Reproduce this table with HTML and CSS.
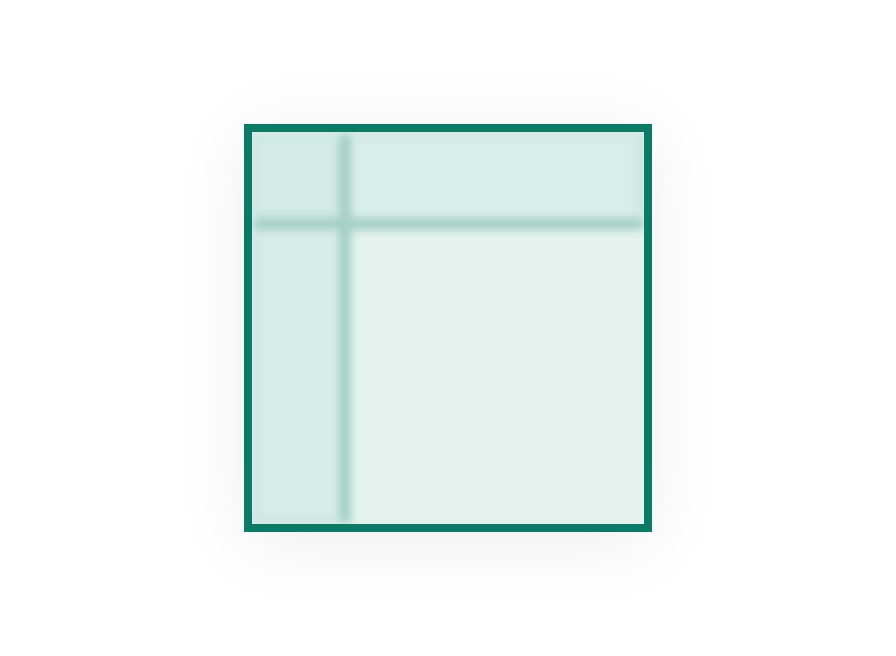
FILE: index.html
```html
<!DOCTYPE html>
<html>
<head>
<meta charset="utf-8">
<link rel="stylesheet" href="styles.css">
</head>
<body>
<div class="stage">
  <div class="frame">
    <div class="grid">
      <div class="cell corner"></div>
      <div class="cell head"></div>
      <div class="cell side"></div>
      <div class="cell body"></div>
    </div>
  </div>
</div>
</body>
</html>
```

FILE: styles.css
```css
html, body {
  margin: 0;
  padding: 0;
  background: #ffffff;
  width: 896px;
  height: 656px;
  overflow: hidden;
}
.stage {
  width: 896px;
  height: 656px;
  display: flex;
  align-items: center;
  justify-content: center;
}
.frame {
  width: 392px;
  height: 392px;
  border: 8px solid #0b7a66;
  background: #e5f2ef;
  box-shadow: 0 10px 70px rgba(0, 0, 0, 0.07);
  overflow: hidden;
}
.grid {
  width: 100%;
  height: 100%;
  display: grid;
  grid-template-columns: 93px 1fr;
  grid-template-rows: 92px 1fr;
  filter: blur(4px);
}
.cell {
  box-sizing: border-box;
}
.corner {
  background: #d3eae6;
  border: 6px solid #a3cfc6;
  border-top-color: #c8e4df;
  border-left-color: #c8e4df;
}
.head {
  background: #d9edea;
  border: 6px solid #a3cfc6;
  border-top-color: #cbe6e1;
  border-right-color: #c3e1db;
}
.side {
  background: #d8ece9;
  border: 6px solid #a3cfc6;
  border-left-color: #c8e4df;
  border-bottom-color: #c3e1db;
}
.body {
  background: #e5f2ef;
  border-top: 6px solid #a3cfc6;
  border-left: 6px solid #a3cfc6;
}
```
